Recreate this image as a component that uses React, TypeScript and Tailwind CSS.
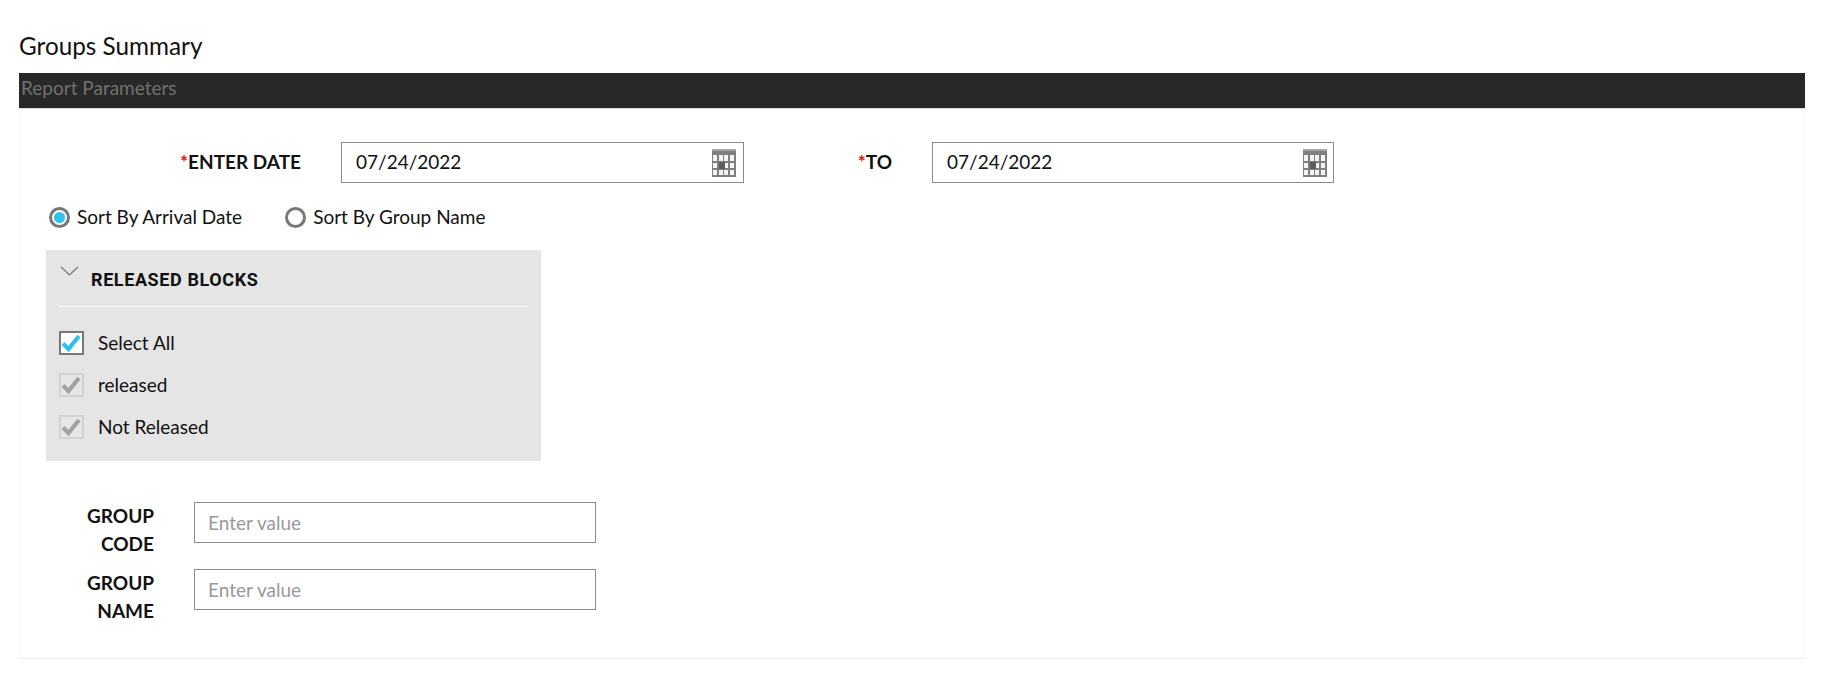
import React from 'react';

const CalendarIcon = () => (
  <svg width="24" height="28" viewBox="0 0 24 28" className="shrink-0">
    <rect x="0" y="0" width="24" height="28" fill="#7f7f7f" />
    <rect x="0" y="0" width="24" height="2" fill="#a8a8a8" />
    {[1, 7, 12, 18].map((x) =>
      [6, 14, 21].map((y) => <rect key={`${x}-${y}`} x={x} y={y} width="4" height={y === 6 ? 6 : 5} fill="#f4f4f4" />)
    )}
    <rect x="7" y="13" width="6" height="7" fill="#5c5c5c" />
  </svg>
);

const CheckMark = ({ color }: { color: string }) => (
  <svg width="25" height="24" viewBox="0 0 25 24" className="absolute left-0 top-0">
    <polyline points="4,12.5 9.5,18 20,5" fill="none" stroke={color} strokeWidth="4.2" />
  </svg>
);

const DateField = ({ value, wide }: { value: string; wide?: boolean }) => (
  <div className={`${wide ? 'w-[403px] pr-[7px]' : 'w-[402px] pr-[6px]'} h-[41px] border border-[#8c8c8c] bg-white flex items-center justify-between pl-[14px]`}>
    <span className="text-[19px] text-[#111]">{value}</span>
    <CalendarIcon />
  </div>
);

const Radio = ({ label, checked }: { label: string; checked?: boolean }) => (
  <label className="flex items-center gap-[7px]">
    <span className="w-[21px] h-[21px] rounded-full border-[3px] border-[#777] flex items-center justify-center bg-white">
      {checked && <span className="w-[11px] h-[11px] rounded-full bg-[#2ec1ea]" />}
    </span>
    <span className="text-[19px] text-[#111]">{label}</span>
  </label>
);

const CheckRow = ({ label, active }: { label: string; active?: boolean }) => (
  <div className="h-[42px] flex items-center gap-[14px]">
    <span className={`relative w-[25px] h-[24px] ${active ? 'border-2 border-[#777] bg-white' : 'border-2 border-[#d2d2d2] bg-[#e6e6e6]'}`}>
      <span className="absolute -left-[2px] -top-[2px]">
        <CheckMark color={active ? '#2ec1ea' : '#a3a3a3'} />
      </span>
    </span>
    <span className="pt-[2px] text-[19px] text-[#111]">{label}</span>
  </div>
);

const TextRow = ({ first, second }: { first: string; second: string }) => (
  <div className="flex items-start">
    <div className="w-[116px] text-right text-[19px] font-bold leading-[28px] text-[#111]">
      {first}
      <br />
      {second}
    </div>
    <div className="ml-[40px] w-[402px] h-[41px] border border-[#8c8c8c] bg-white flex items-center px-[13px] pt-[2px] text-[19px] text-[#999]">
      Enter value
    </div>
  </div>
);

export default function App() {
  return (
    <div className="min-h-[675px] bg-white font-['Lato',sans-serif] px-[19px] pt-[32px]">
      <h1 className="text-[24.3px] leading-[28px] text-[#111] font-normal">Groups Summary</h1>
      <div className="mt-[13px] h-[35px] bg-[#282828] flex items-center pl-[2px] pb-[4px] text-[19px] text-[#707070]">
        Report Parameters
      </div>
      <div className="border-t border-[#dcdcdc] border-b border-b-[#ececec] border-x border-x-[#fafafa] pb-[33px]">
        <div className="flex items-center mt-[33px] -ml-px">
          <div className="w-[282px] text-right text-[19px] font-bold text-[#111]">
            <span className="text-[#e01010]">*</span>ENTER DATE
          </div>
          <div className="ml-[40px]"><DateField value="07/24/2022" wide /></div>
          <div className="w-[148px] text-right text-[19px] font-bold text-[#111]">
            <span className="text-[#e01010]">*</span>TO
          </div>
          <div className="ml-[40px]"><DateField value="07/24/2022" /></div>
        </div>
        <div className="flex items-center gap-[43px] ml-[29px] mt-[20px]">
          <Radio label="Sort By Arrival Date" checked />
          <Radio label="Sort By Group Name" />
        </div>
        <div className="ml-[26px] mt-[18px] w-[495px] h-[211px] bg-[#e5e5e5] px-[13px]">
          <div className="h-[57px] border-b border-white flex items-center">
            <svg width="20" height="10" viewBox="0 0 20 10" className="ml-[1px] -mt-[14px] shrink-0">
              <polyline points="1,1 9.5,9 18,1" fill="none" stroke="#777" strokeWidth="1.2" />
            </svg>
            <span className="ml-[11px] pt-[4px] font-['Roboto',sans-serif] text-[18px] font-bold tracking-[0.6px] text-[#111]">RELEASED BLOCKS</span>
          </div>
          <div className="mt-[15px]">
            <CheckRow label="Select All" active />
            <CheckRow label="released" />
            <CheckRow label="Not Released" />
          </div>
        </div>
        <div className="mt-[41px] flex flex-col gap-[11px] ml-[18px]">
          <TextRow first="GROUP" second="CODE" />
          <TextRow first="GROUP" second="NAME" />
        </div>
      </div>
    </div>
  );
}
